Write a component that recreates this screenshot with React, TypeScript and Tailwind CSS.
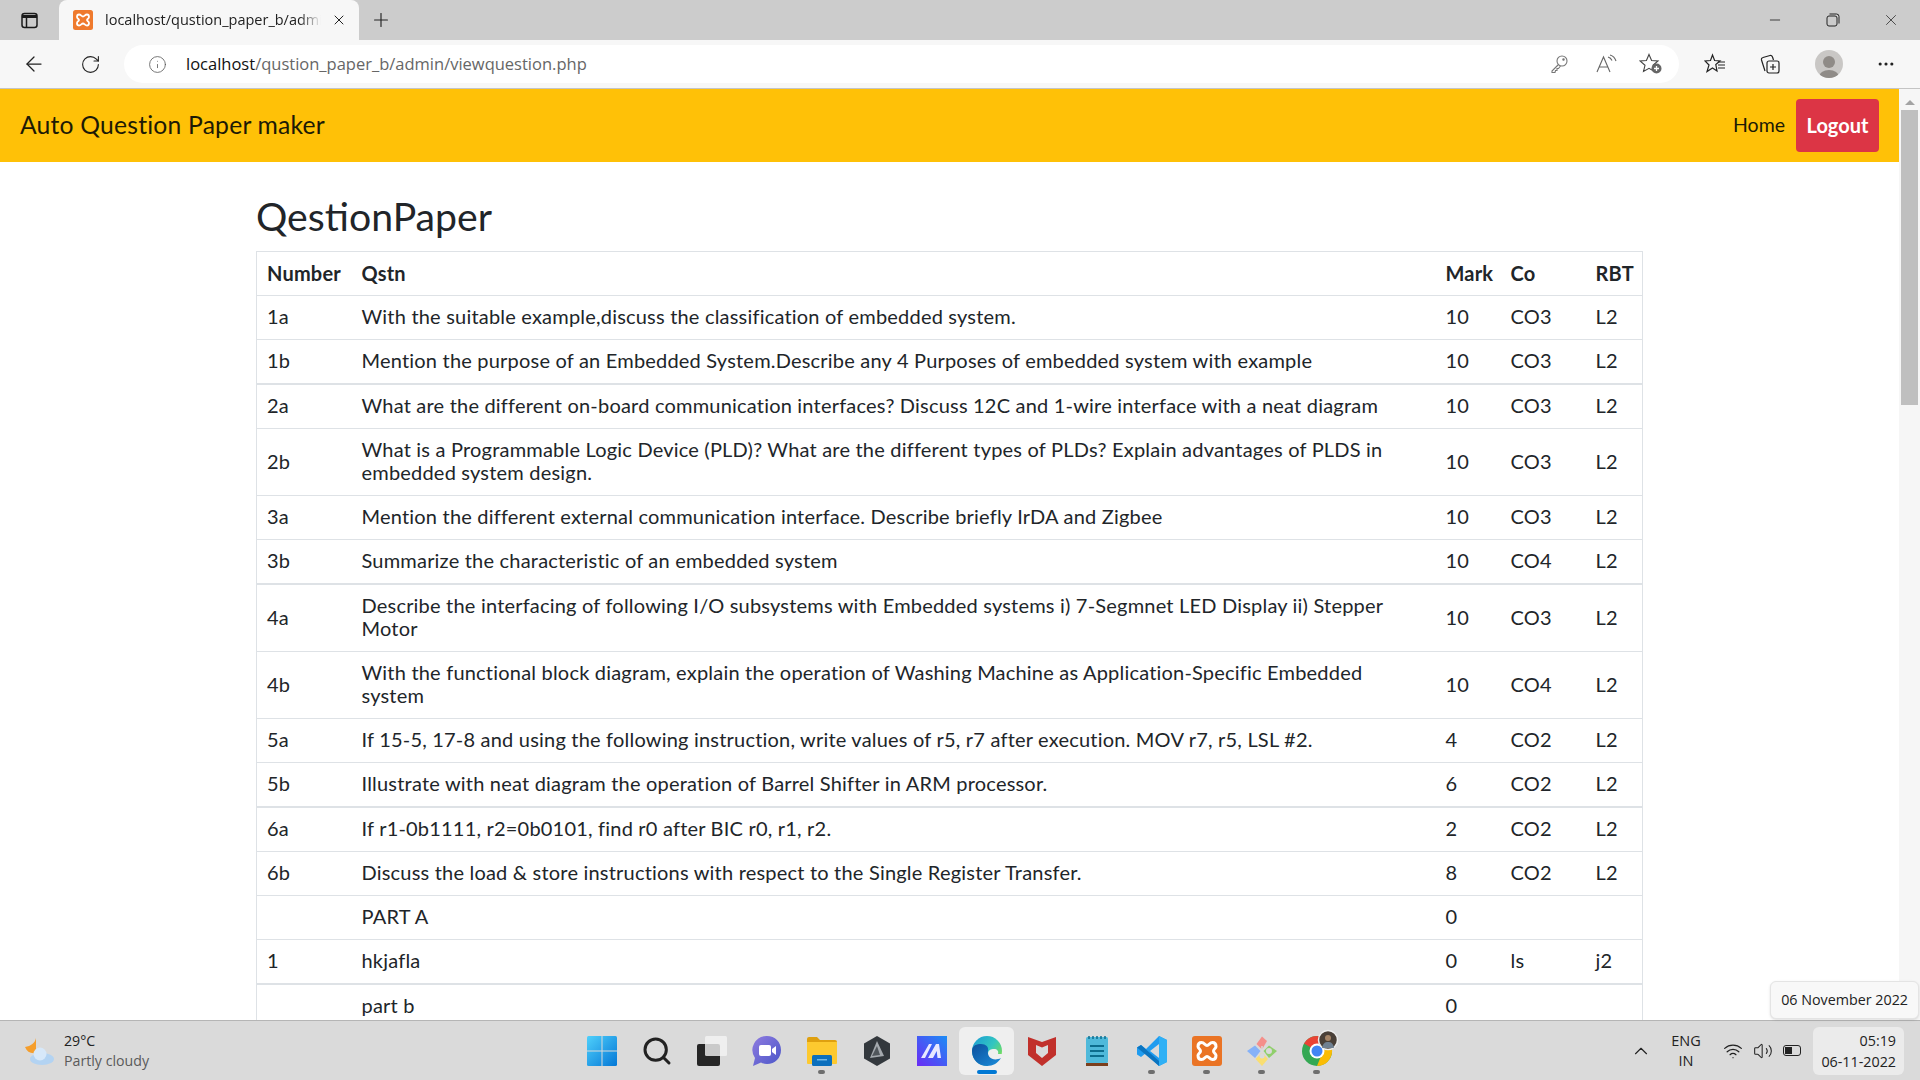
import React from 'react';
import { ArrowLeft, RotateCw, Info, Plus, X, Minus, ChevronUp, Wifi, Volume2, MoreHorizontal, Search } from 'lucide-react';

const rows = [
  ['1a', 'With the suitable example,discuss the classification of embedded system.', '10', 'CO3', 'L2'],
  ['1b', 'Mention the purpose of an Embedded System.Describe any 4 Purposes of embedded system with example', '10', 'CO3', 'L2'],
  ['2a', 'What are the different on-board communication interfaces? Discuss 12C and 1-wire interface with a neat diagram', '10', 'CO3', 'L2'],
  ['2b', 'What is a Programmable Logic Device (PLD)? What are the different types of PLDs? Explain advantages of PLDS in embedded system design.', '10', 'CO3', 'L2'],
  ['3a', 'Mention the different external communication interface. Describe briefly IrDA and Zigbee', '10', 'CO3', 'L2'],
  ['3b', 'Summarize the characteristic of an embedded system', '10', 'CO4', 'L2'],
  ['4a', 'Describe the interfacing of following I/O subsystems with Embedded systems i) 7-Segmnet LED Display ii) Stepper Motor', '10', 'CO3', 'L2'],
  ['4b', 'With the functional block diagram, explain the operation of Washing Machine as Application-Specific Embedded system', '10', 'CO4', 'L2'],
  ['5a', 'If 15-5, 17-8 and using the following instruction, write values of r5, r7 after execution. MOV r7, r5, LSL #2.', '4', 'CO2', 'L2'],
  ['5b', 'Illustrate with neat diagram the operation of Barrel Shifter in ARM processor.', '6', 'CO2', 'L2'],
  ['6a', 'If r1-0b1111, r2=0b0101, find r0 after BIC r0, r1, r2.', '2', 'CO2', 'L2'],
  ['6b', 'Discuss the load & store instructions with respect to the Single Register Transfer.', '8', 'CO2', 'L2'],
  ['', 'PART A', '0', '', ''],
  ['1', 'hkjafla', '0', 'ls', 'j2'],
  ['', 'part b', '0', '', ''],
];

// rows whose bottom line snaps to 2px in the screenshot
const thickRows = ['1b', '3b', '5b', '1'];

const BrowserBar = () => (
  <div className="shrink-0 font-['Open_Sans',sans-serif]">
    <div className="flex h-10 items-end bg-[#cccccc]">
      <div className="flex h-10 w-[59px] items-center justify-center">
        <svg width="17" height="17" viewBox="0 0 17 17" fill="none" stroke="#1a1a1a" strokeWidth="1.5">
          <rect x="1" y="1.5" width="15" height="14" rx="2.5" />
          <path d="M1 4.500h15" strokeWidth="3" />
          <path d="M5.500 5v10" />
        </svg>
      </div>
      <div className="flex h-10 w-[300px] items-center rounded-t-lg bg-[#f7f7f7] pl-[14px]">
        <svg width="20" height="20" viewBox="0 0 20 20" className="shrink-0">
          <rect width="20" height="20" rx="2.5" fill="#ef7a2d" />
          <path d="M6 4.500c2 0 2.500 2 4 2s2-2 4-2 2 1 2 2.500-2 1.800-2 3 2 1.500 2 3-1 2.500-2 2.500c-2 0-2.500-2-4-2s-2 2-4 2-2-1-2-2.500 2-1.800 2-3-2-1.500-2-3 1-2.500 2-2.500z" fill="none" stroke="#fff" strokeWidth="1.800" />
        </svg>
        <span className="ml-[12px] w-[216px] overflow-hidden whitespace-nowrap text-[14.5px] text-[#222] [mask-image:linear-gradient(to_right,black_90%,transparent)]">localhost/qustion_paper_b/admin/viewquestion.php</span>
        <X size={16} strokeWidth={1.5} className="ml-[10px] shrink-0 text-[#222]" />
      </div>
      <div className="flex h-10 w-[44px] items-center justify-center">
        <Plus size={22} strokeWidth={1.25} className="text-[#222]" />
      </div>
      <div className="flex-1" />
      <div className="flex h-10 items-center text-[#222]">
        <div className="flex w-[58px] justify-center"><Minus size={16} strokeWidth={1.25} /></div>
        <div className="flex w-[58px] justify-center">
          <svg width="14" height="14" viewBox="0 0 14 14" fill="none" stroke="#222" strokeWidth="1">
            <rect x="1" y="3" width="10" height="10" rx="2" />
            <path d="M3.500 1h7A2.500 2.500 0 0 1 13 3.500v7" />
          </svg>
        </div>
        <div className="flex w-[58px] justify-center"><X size={18} strokeWidth={1} /></div>
      </div>
    </div>
    <div className="flex h-[49px] items-center border-b border-[#c4c4c4] bg-[#f7f7f7]">
      <div className="flex w-[68px] justify-center"><ArrowLeft size={24} strokeWidth={1.25} className="text-[#222]" /></div>
      <div className="flex w-[44px] justify-center"><RotateCw size={21} strokeWidth={1.25} className="text-[#222]" /></div>
      <div className="ml-[12px] flex h-[38px] w-[1555px] items-center rounded-full bg-white pl-[24px] pr-[16px]">
        <Info size={19} strokeWidth={1} className="text-[#555]" />
        <div className="ml-[19px] flex-1 text-[16.5px]">
          <span className="text-[#111]">localhost</span><span className="text-[#666]">/qustion_paper_b/admin/viewquestion.php</span>
        </div>
        {/* key */}
        <svg width="20" height="20" viewBox="0 0 20 20" fill="none" stroke="#777" strokeWidth="1.100">
          <circle cx="13" cy="7" r="5" />
          <path d="M9.500 10.500 3 17v1.500h3l.5-2H8v-2h1.500l2-2.500" />
          <circle cx="14.500" cy="5.500" r=".7" fill="#777" />
        </svg>
        {/* read aloud */}
        <svg width="22" height="20" viewBox="0 0 22 20" fill="none" stroke="#666" strokeWidth="1.100" className="ml-[27px]">
          <path d="M1 18 7.500 3 14 18M3.500 13h8" />
          <path d="M12 3a6 6 0 0 1 4 3.500M14 1a9 9 0 0 1 6 6" />
        </svg>
        {/* favorite plus */}
        <svg width="24" height="22" viewBox="0 0 24 22" className="ml-[21px]">
          <path d="M10 1.500 12.600 7.500 19 8 14 12.300 15.500 18.500 10 15.300 4.500 18.500 6 12.300 1 8 7.400 7.500z" fill="none" stroke="#444" strokeWidth="1.100" />
          <circle cx="17.500" cy="15.500" r="5" fill="#666" />
          <path d="M17.500 13v5M15 15.500h5" stroke="#fff" strokeWidth="1.300" />
        </svg>
      </div>
      <div className="flex flex-1 items-center justify-between pl-[25px] pr-[24px] text-[#222]">
        {/* favorites */}
        <svg width="22" height="22" viewBox="0 0 22 22" fill="none" stroke="#222" strokeWidth="1.200">
          <path d="M8.500 2 10.600 7.500 16 8 11.800 11.500 13 18 8.500 15 3 18.500 5 12 1 8 6.500 7.500z" />
          <path d="M14 9h7M14 12h7M14 15h7" />
        </svg>
        {/* collections */}
        <svg width="22" height="22" viewBox="0 0 22 22" fill="none" stroke="#222" strokeWidth="1.200">
          <rect x="8" y="8" width="12" height="12" rx="2" />
          <path d="M14 11v6M11 14h6M6 18 2.500 7a2 2 0 0 1 1.500-2.500L11 2.500a2 2 0 0 1 2.500 1.500L14.500 7" />
        </svg>
        <div className="flex h-7 w-7 items-end justify-center overflow-hidden rounded-full bg-[#c9c7c5]">
          <svg width="22" height="24" viewBox="0 0 22 24" fill="#8f8b87">
            <circle cx="11" cy="8" r="6" />
            <ellipse cx="11" cy="23" rx="10" ry="7" />
          </svg>
        </div>
        <MoreHorizontal size={20} strokeWidth={1.75} />
      </div>
    </div>
  </div>
);

const Page = () => (
  <div className="flex min-h-0 flex-1 overflow-hidden">
    <div className="min-w-0 flex-1 overflow-hidden bg-white font-['Lato',sans-serif] text-[#212529]">
      <nav className="flex h-[73px] items-center justify-between bg-[#ffc107] pl-5 pr-5">
        <span className="mb-[2px] text-[24.7px] tracking-[0.2px] text-[#1d1a05]">Auto Question Paper maker</span>
        <div className="flex items-center">
          <span className="mr-[11px] mb-[2px] text-[19.5px] text-[#1d1a05]">Home</span>
          <button className="h-[53px] w-[83px] rounded-[4px] bg-[#dc3545] pb-[2px] text-[20px] font-bold text-white">Logout</button>
        </div>
      </nav>
      <div className="mx-auto w-[1387px]">
        <h2 className="mt-[29px] mb-[10px] text-[39.2px] leading-[50px] font-normal">QestionPaper</h2>
        <table className="w-full table-fixed border-collapse border border-[#dee2e6] text-[20px] leading-[23px] tracking-[0.2px]">
          <colgroup>
            <col className="w-[95px]" />
            <col />
            <col className="w-[65px]" />
            <col className="w-[85px]" />
            <col className="w-[57px]" />
          </colgroup>
          <thead>
            <tr className="border-b border-[#dee2e6] font-bold">
              <td className="px-[10px] py-[10px]">Number</td>
              <td className="px-[10px] py-[10px]">Qstn</td>
              <td className="px-[10px] py-[10px]">Mark</td>
              <td className="px-[10px] py-[10px]">Co</td>
              <td className="px-[10px] py-[10px]">RBT</td>
            </tr>
          </thead>
          <tbody>
            {rows.map((r, i) => (
              <tr key={i} className={thickRows.includes(r[0]) ? 'border-b-2 border-[#dee2e6]' : 'border-b border-[#dee2e6]'}>
                {r.map((c, j) => (
                  <td key={j} className="px-[10px] pt-[9px] pb-[11px]">{c}</td>
                ))}
              </tr>
            ))}
          </tbody>
        </table>
      </div>
    </div>
    <div className="flex w-[21px] shrink-0 flex-col items-center bg-[#f6f6f6]">
      <div className="mt-[11px] h-0 w-0 border-x-[5px] border-b-[5px] border-x-transparent border-b-[#a3a3a3]" />
      <div className="mt-[5px] h-[295px] w-[17px] bg-[#bfbfbf]" />
    </div>
  </div>
);

const AppIcons = [
  // start
  <svg key="start" width="30" height="30" viewBox="0 0 30 30">
    <defs>
      <linearGradient id="startFill" x1="0" y1="0" x2="1" y2="1">
        <stop offset="0" stopColor="#4fd0fb" />
        <stop offset="1" stopColor="#0477d6" />
      </linearGradient>
    </defs>
    <rect width="30" height="30" rx="1.500" fill="url(#startFill)" />
    <path d="M15 0v30M0 15h30" stroke="#dadada" strokeWidth="1" />
  </svg>,
  // search
  <Search key="search" size={32} strokeWidth={2.25} className="text-[#222]" />,
  // task view
  <svg key="taskview" width="30" height="30" viewBox="0 0 30 30">
    <rect y="8" width="23" height="22" rx="2" fill="#262626" />
    <rect x="8" y="0" width="22" height="20" rx="1.500" fill="#f4f4f4" fillOpacity="0.8" />
  </svg>,
  // chat
  <svg key="chat" width="30" height="32" viewBox="0 0 30 32">
    <defs>
      <linearGradient id="chatFill" x1="0" y1="0" x2="1" y2="1">
        <stop offset="0" stopColor="#8f7be0" />
        <stop offset="1" stopColor="#4a56c8" />
      </linearGradient>
    </defs>
    <path d="M15 1c8 0 14 6 14 14s-6 14-14 14c-2 0-4-.5-6-1.500L1 31l2-8A14 14 0 0 1 15 1z" fill="url(#chatFill)" />
    <rect x="7" y="10" width="12" height="11" rx="2" fill="#fff" />
    <path d="m20 14 4-3v9l-4-3z" fill="#fff" />
  </svg>,
  // explorer
  <svg key="folder" width="30" height="30" viewBox="0 0 30 30">
    <path d="M0 3a2 2 0 0 1 2-2h8l3 3h15a2 2 0 0 1 2 2v4H0z" fill="#dfa00f" />
    <path d="M0 6h30v21a1 1 0 0 1-1 1H1a1 1 0 0 1-1-1z" fill="#fdc92f" />
    <rect x="5" y="19" width="20" height="11" rx="1.500" fill="#0b6fbd" />
    <rect x="10" y="23" width="10" height="1.500" fill="#6fb7e8" />
  </svg>,
  // hexagon app
  <svg key="hex" width="26" height="30" viewBox="0 0 26 30">
    <path d="M13 0 26 7.500v15L13 30 0 22.500v-15z" fill="#33383d" />
    <path d="M13 5 20 20 6 22z" fill="#a4a9ae" />
    <path d="M13 10 16 19 8 20z" fill="#50565b" />
  </svg>,
  // blue square
  <svg key="studio" width="30" height="30" viewBox="0 0 30 30">
    <defs>
      <linearGradient id="studioFill" x1="0" y1="1" x2="1" y2="0">
        <stop offset="0" stopColor="#6a2bf5" />
        <stop offset="1" stopColor="#1c8df5" />
      </linearGradient>
    </defs>
    <rect width="30" height="30" fill="url(#studioFill)" />
    <path d="M4 22 12 8h3L8 22zM11 22l8-14h3l2 14h-3.500l-.8-7-3.700 7z" fill="#e8e8ff" />
  </svg>,
  // edge
  <svg key="edge" width="30" height="30" viewBox="0 0 30 30">
    <defs>
      <linearGradient id="edgeTop" x1="0" y1="0" x2="1" y2="0.7">
        <stop offset="0" stopColor="#1a9ad6" />
        <stop offset="0.6" stopColor="#33c6c0" />
        <stop offset="1" stopColor="#7be04f" />
      </linearGradient>
      <linearGradient id="edgeLow" x1="0" y1="0" x2="1" y2="1">
        <stop offset="0" stopColor="#0c4f9c" />
        <stop offset="1" stopColor="#1a8ddb" />
      </linearGradient>
    </defs>
    <circle cx="15" cy="15" r="15" fill="url(#edgeTop)" />
    <path d="M16 18c0-4 3-5 6-5s5 2 4 5h4v12H16z" fill="#efefef" />
    <path d="M15 30C7 30 0 24 0 15 0 9 5 8 9 8c5 0 8 3 7 7-1 6 5 11 13 7-3 5-8 8-14 8z" fill="url(#edgeLow)" />
  </svg>,
  // mcafee
  <svg key="mcafee" width="28" height="30" viewBox="0 0 28 30">
    <path d="M0 1 14 6 28 1v18L14 30 0 19z" fill="#c1302b" />
    <path d="M8 9 14 11.500 20 9v8l-6 5-6-5z" fill="#dadada" />
  </svg>,
  // notepad
  <svg key="notepad" width="22" height="30" viewBox="0 0 22 30">
    <rect y="1" width="22" height="26" rx="1.500" fill="#4fb9da" />
    <rect y="27" width="22" height="3" fill="#7b3f1d" />
    <path d="M4 10h14M4 15h14M4 20h14" stroke="#0d6d8e" strokeWidth="2" />
    <path d="M3 0v3M7 0v3M11 0v3M15 0v3M19 0v3" stroke="#0d6d8e" strokeWidth="1.500" />
  </svg>,
  // vs code
  <svg key="vscode" width="30" height="30" viewBox="0 0 30 30">
    <path d="M22 0 30 4v22l-8 4L9 17l-5 4-4-2.500V11.500L4 9l5 4z" fill="#1f9cf0" />
    <path d="M22 8v14l-9-7z" fill="#dadada" />
    <path d="M22 0 30 4v22l-8 4z" fill="#2fb0f5" />
    <path d="M4 9l18 16v5L0 11.500z" fill="#0b74c0" />
  </svg>,
  // xampp
  <svg key="xampp" width="30" height="30" viewBox="0 0 30 30">
    <rect width="30" height="30" rx="3" fill="#ea7425" />
    <path d="M9.500 6.500c3 0 3.500 3 5.500 3s2.500-3 5.500-3 3.500 2 3.500 4-2.500 2.500-2.500 4.500 2.500 2.500 2.500 4.500-1 4-3.500 4-3.500-3-5.500-3-2.500 3-5.500 3-3.500-2-3.500-4 2.500-2.500 2.500-4.500-2.500-2.500-2.500-4.500 1-4 3.500-4z" fill="none" stroke="#fff" strokeWidth="3" />
  </svg>,
  // gem
  <svg key="gem" width="30" height="30" viewBox="0 0 30 30">
    <path d="M15 13.500 9.500 8 15 .5 20 5z" fill="#f58f8a" />
    <path d="M13.500 15 8 9.500 0 15l8 7z" fill="#86b2f7" />
    <path d="m16.500 15 5.500-5.500 8 5.500-8 7z" fill="#90cf6c" />
    <path d="m15 16.500 6 6.500-6 7-6.500-7z" fill="#f9de72" />
    <circle cx="22" cy="15" r="3" fill="#dadada" />
    <path d="M15 10v9" stroke="#dadada" strokeWidth="1.500" />
    <circle cx="15" cy="20" r="2.500" fill="#dadada" />
  </svg>,
  // chrome with profile badge
  <svg key="chrome" width="30" height="30" viewBox="0 0 30 30" overflow="visible">
    <circle cx="15" cy="15" r="15" fill="#34a853" />
    <path d="M15 0a15 15 0 0 1 13 7.500L15 15 2 7.500A15 15 0 0 1 15 0z" fill="#ea4335" />
    <path d="M28 7.500A15 15 0 0 1 15 30l6-15z" fill="#fbbc05" />
    <circle cx="15" cy="15" r="7.500" fill="#fff" />
    <circle cx="15" cy="15" r="5.500" fill="#4285f4" />
    <circle cx="26" cy="4" r="9.500" fill="#4a4038" stroke="#eeeeee" strokeWidth="1.500" />
    <circle cx="26" cy="2" r="3" fill="#a58467" />
    <path d="M20 12c1-5 3-6 6-6s5 1 6 6z" fill="#6f8091" />
  </svg>,
];

const runningDots = [4, 10, 11, 12, 13];

const Taskbar = () => (
  <div className="relative flex h-[60px] shrink-0 items-center border-t border-[#b5b5b5] bg-[#dadada] font-['Open_Sans',sans-serif] text-[14px]">
    <div className="absolute bottom-[61px] right-[1px] rounded-md border border-[#e4e4e4] bg-[#f8f8f8] px-[10px] py-[8px] text-[14.3px] leading-[20px] text-[#222] shadow-sm">06 November 2022</div>
    <div className="flex w-[574px] shrink-0 items-center pl-[24px]">
      <svg width="30" height="30" viewBox="0 0 30 30">
        <path d="M12 2c-1 5-5 8-11 9 2 5 6 7 11 6z" fill="#f59e2c" />
        <ellipse cx="18" cy="23" rx="12" ry="6" fill="#b3d3f2" />
        <circle cx="16" cy="18" r="6.500" fill="#d7e8f9" />
      </svg>
      <div className="ml-[10px] text-[14.2px] leading-[20px]">
        <div className="text-[#222]">29°C</div>
        <div className="text-[#5a5a5a]">Partly cloudy</div>
      </div>
    </div>
    <div className="flex shrink-0 items-center">
      {AppIcons.map((icon, i) => (
        <div key={i} className={i === 7 ? 'relative flex h-[48px] w-[55px] items-center justify-center rounded-md bg-[#efefef]' : 'relative flex h-[48px] w-[55px] items-center justify-center'}>
          {icon}
          {i === 7 && <div className="absolute bottom-[1px] h-[4px] w-[20px] rounded-full bg-[#0078d4]" />}
          {runningDots.includes(i) && <div className="absolute bottom-[1px] h-[4px] w-[7px] rounded-full bg-[#6e6e6e]" />}
        </div>
      ))}
    </div>
    <div className="flex flex-1 items-center justify-end pr-[16px] text-[#222]">
      <ChevronUp size={22} strokeWidth={1.25} />
      <div className="ml-[14px] w-[40px] text-center text-[14.5px] leading-[20px]">ENG<br />IN</div>
      <Wifi size={20} strokeWidth={1.5} className="ml-[17px]" />
      <Volume2 size={20} strokeWidth={1.25} className="ml-[10px]" />
      <div className="ml-[10px] h-[11px] w-[18px] rounded-[3px] border border-[#222] p-[1px]"><div className="h-full w-1/2 bg-[#222]" /></div>
      <div className="ml-[12px] h-[48px] w-[91px] rounded-md bg-[#ebebeb] pr-[8px] pt-[3px] text-right text-[14.3px] leading-[21px]">05:19<br />06-11-2022</div>
    </div>
  </div>
);

export default function App() {
  return (
    <div className="flex h-screen w-full flex-col overflow-hidden">
      <BrowserBar />
      <Page />
      <Taskbar />
    </div>
  );
}
